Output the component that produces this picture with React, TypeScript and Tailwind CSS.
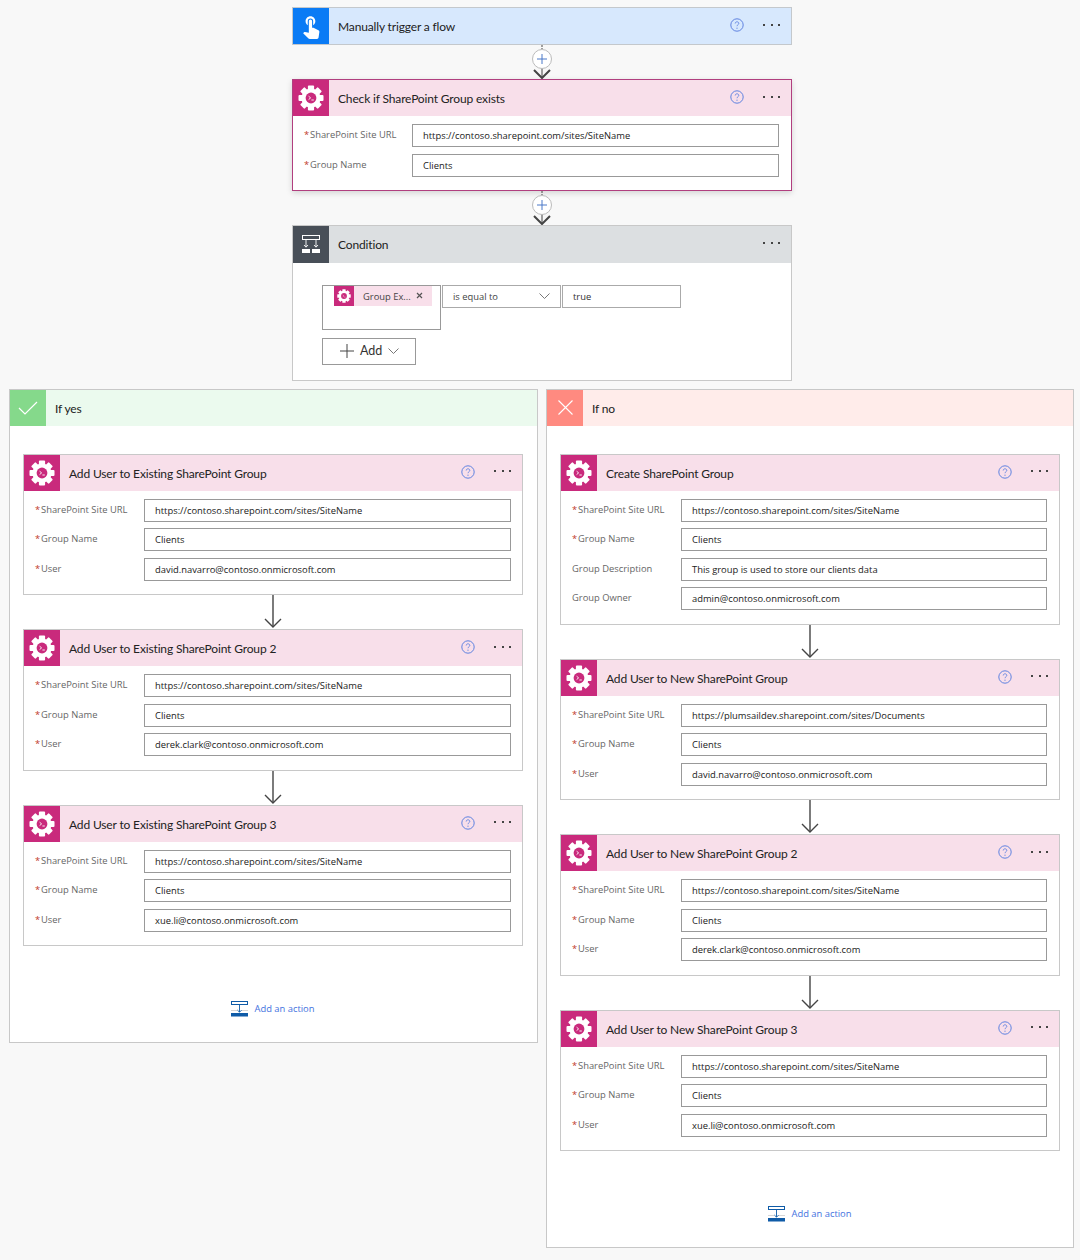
import React from "react";
import { MdTouchApp } from "react-icons/md";

const PINK = "#c92a7c";

function Gear({ size = 26, inner = PINK }: { size?: number; inner?: string }) {
  const teeth = [0, 45, 90, 135, 180, 225, 270, 315];
  return (
    <svg width={size} height={size} viewBox="0 0 26 26">
      {teeth.map((a) => (
        <rect key={a} x="9.9" y="0.5" width="6.2" height="5.5" rx="1" fill="#fff" transform={`rotate(${a} 13 13)`} />
      ))}
      <circle cx="13" cy="13" r="9.6" fill="#fff" />
      <circle cx="13" cy="13" r="5.4" fill={inner} />
      <path d="M10.6 11.2l2 1.7-2 1.7" stroke="#fff" strokeWidth="0.9" fill="none" />
      <path d="M13.4 15h2.4" stroke="#fff" strokeWidth="0.9" />
    </svg>
  );
}

function CondIcon() {
  return (
    <svg width="20" height="20" viewBox="0 0 20 20" fill="none" stroke="#fff">
      <rect x="1.5" y="1.5" width="17" height="4" strokeWidth="1" />
      <path d="M5 6v7M15 6v7M3 11l2 2.2L7 11M13 11l2 2.2 2-2.2" strokeWidth="0.9" />
      <rect x="1" y="15" width="8" height="4" fill="#fff" stroke="none" />
      <rect x="11" y="15" width="8" height="4" fill="#fff" stroke="none" />
    </svg>
  );
}

function HelpIcon() {
  return (
    <svg width="14" height="14" viewBox="0 0 14 14" fill="none">
      <circle cx="7" cy="7" r="6.2" stroke="#5f82e0" strokeWidth="1" />
      <path d="M5.2 5.5c0-1 .8-1.7 1.8-1.7s1.8.7 1.8 1.6c0 1.3-1.8 1.4-1.8 2.8" stroke="#5f82e0" strokeWidth="0.9" />
      <circle cx="7" cy="10.2" r="0.6" fill="#5f82e0" />
    </svg>
  );
}

function Dots() {
  return (
    <div className="flex w-[17px] justify-between">
      <span className="h-[2px] w-[2px] bg-[#444]" />
      <span className="h-[2px] w-[2px] bg-[#444]" />
      <span className="h-[2px] w-[2px] bg-[#444]" />
    </div>
  );
}

type Field = { label: string; value: string; req?: boolean };

function FieldRow({ f, labelW }: { f: Field; labelW: string }) {
  return (
    <div className="flex h-[23px] items-start">
      <div className={`${labelW} flex shrink-0 items-center gap-[3px] pt-[3px] text-[9.4px] leading-[16px] text-[#666]`}>
        {f.req !== false && <span className="w-[3px] text-[#c0392b]">*</span>}
        <span>{f.label}</span>
      </div>
      <div className="flex h-[23px] flex-1 items-center border border-[#999] bg-white pl-[10px] pt-[2px] text-[9.4px] text-[#222]">{f.value}</div>
    </div>
  );
}

function Header({
  title,
  head,
  iconBg,
  icon,
  help = true,
  dots = true,
  height = "h-[36px]",
}: {
  title: string;
  head: string;
  iconBg: string;
  icon: React.ReactNode;
  help?: boolean;
  dots?: boolean;
  height?: string;
}) {
  return (
    <div className={`flex ${height} items-center ${head}`}>
      <div className={`flex ${height} w-[36px] items-center justify-center ${iconBg}`}>{icon}</div>
      <div className="flex-1 pl-[9px] pt-[2px] font-['Lato','Open_Sans',sans-serif] text-[12px] tracking-[-0.15px] text-[#222]">{title}</div>
      {help && (
        <div className="mb-[2px] mr-[19px]">
          <HelpIcon />
        </div>
      )}
      {dots && (
        <div className="mb-[3px] mr-[11px]">
          <Dots />
        </div>
      )}
    </div>
  );
}

function ActionCard({ title, fields, narrow }: { title: string; fields: Field[]; narrow?: boolean }) {
  return (
    <div className="w-[500px] border border-[#c8c8c8] bg-white pb-[13.5px]">
      <Header title={title} head="bg-[#f8dfea]" iconBg="bg-[#c92a7c]" icon={<Gear />} />
      <div className={`flex flex-col gap-[6.5px] pt-[8px] pl-[11px] ${narrow ? "pr-[12px]" : "pr-[11px]"}`}>
        {fields.map((f) => (
          <FieldRow key={f.label} f={f} labelW="w-[109px]" />
        ))}
      </div>
    </div>
  );
}

function Arrow() {
  return (
    <svg width="20" height="34" viewBox="0 0 20 34" fill="none" stroke="#444" className="block">
      <path d="M10 0v32" strokeWidth="1.4" />
      <path d="M2 24l8 8 8-8" strokeWidth="1.4" />
    </svg>
  );
}

function PlusConnector() {
  return (
    <div className="relative flex h-[34px] w-[22px] justify-center">
      <svg width="20" height="34" viewBox="0 0 20 34" fill="none" stroke="#444">
        <path d="M10 0v4" strokeWidth="1" strokeDasharray="2 1" />
        <path d="M10 20v12" strokeWidth="1" />
        <path d="M2 25l8 8 8-8" strokeWidth="2" />
      </svg>
      <div className="absolute left-[1px] top-[4px] flex h-[20px] w-[20px] items-center justify-center rounded-full border border-[#bbb] bg-white">
        <svg width="10" height="10" viewBox="0 0 10 10" stroke="#4a78c8" strokeWidth="1">
          <path d="M5 0v10M0 5h10" />
        </svg>
      </div>
    </div>
  );
}

function AddAction() {
  return (
    <div className="flex items-center justify-center gap-[6px]">
      <svg width="17" height="16" viewBox="0 0 17 16" fill="none">
        <rect x="0.5" y="0.5" width="16" height="3" stroke="#0f5ba7" />
        <path d="M8.5 4v7M6.3 9l2.2 2.2L10.7 9" stroke="#0f5ba7" strokeWidth="0.9" />
        <path d="M0 9.5h6M11 9.5h6" stroke="#bbb" strokeWidth="0.6" />
        <rect x="0" y="12" width="17" height="3.5" fill="#0f5ba7" />
      </svg>
      <span className="text-[9.4px] text-[#4472e0]">Add an action</span>
    </div>
  );
}

function Branch({
  title,
  head,
  iconBg,
  icon,
  width,
  cards,
  inner,
  narrow,
}: {
  title: string;
  head: string;
  iconBg: string;
  icon: React.ReactNode;
  width: string;
  cards: { title: string; fields: Field[] }[];
  inner: string;
  narrow?: boolean;
}) {
  return (
    <div className={`${width} shrink-0 border border-[#c8c8c8] bg-white`}>
      <Header title={title} head={head} iconBg={iconBg} icon={icon} help={false} dots={false} />
      <div className={`flex flex-col items-center pt-[28px] ${inner}`}>
        {cards.map((c, i) => (
          <React.Fragment key={c.title}>
            {i > 0 && <Arrow />}
            <ActionCard title={c.title} fields={c.fields} narrow={narrow} />
          </React.Fragment>
        ))}
        <div className="pb-[25px] pt-[55px]">
          <AddAction />
        </div>
      </div>
    </div>
  );
}

const URL = "https://contoso.sharepoint.com/sites/SiteName";
const site = (v = URL): Field => ({ label: "SharePoint Site URL", value: v });
const group: Field = { label: "Group Name", value: "Clients" };
const user = (v: string): Field => ({ label: "User", value: v });

const yesCards = [
  { title: "Add User to Existing SharePoint Group", fields: [site(), group, user("david.navarro@contoso.onmicrosoft.com")] },
  { title: "Add User to Existing SharePoint Group 2", fields: [site(), group, user("derek.clark@contoso.onmicrosoft.com")] },
  { title: "Add User to Existing SharePoint Group 3", fields: [site(), group, user("xue.li@contoso.onmicrosoft.com")] },
];

const noCards = [
  {
    title: "Create SharePoint Group",
    fields: [
      site(),
      group,
      { label: "Group Description", value: "This group is used to store our clients data", req: false },
      { label: "Group Owner", value: "admin@contoso.onmicrosoft.com", req: false },
    ],
  },
  {
    title: "Add User to New SharePoint Group",
    fields: [site("https://plumsaildev.sharepoint.com/sites/Documents"), group, user("david.navarro@contoso.onmicrosoft.com")],
  },
  { title: "Add User to New SharePoint Group 2", fields: [site(), group, user("derek.clark@contoso.onmicrosoft.com")] },
  { title: "Add User to New SharePoint Group 3", fields: [site(), group, user("xue.li@contoso.onmicrosoft.com")] },
];

export default function App() {
  return (
    <div className="flex h-[1260px] w-[1080px] flex-col bg-[#f8f8f8] pt-[7px] font-['Open_Sans','Liberation_Sans',sans-serif]">
      <div className="flex flex-col items-center pl-[4px]">
        <div className="w-[500px] border border-[#c4c8cc]">
          <Header title="Manually trigger a flow" head="bg-[#d7e8fd]" iconBg="bg-[#0a7bf5]" icon={<MdTouchApp size={26} color="#fff" />} />
        </div>
        <PlusConnector />
        <div className="w-[500px] border border-[#b13f7f] bg-white pb-[13px] shadow-[0_2px_6px_rgba(0,0,0,0.15)]">
          <Header title="Check if SharePoint Group exists" head="bg-[#f8dfea]" iconBg="bg-[#c92a7c]" icon={<Gear />} />
          <div className="flex flex-col gap-[6.5px] pt-[8px] pl-[11px] pr-[12px]">
            <FieldRow f={site()} labelW="w-[108px]" />
            <FieldRow f={group} labelW="w-[108px]" />
          </div>
        </div>
        <PlusConnector />
        <div className="w-[500px] border border-[#c8c8c8] bg-white pb-[15px]">
          <Header title="Condition" head="bg-[#dcdfe1]" iconBg="bg-[#484f58]" icon={<CondIcon />} help={false} height="h-[37px]" />
          <div className="pl-[29px] pt-[22px]">
            <div className="flex items-start gap-px">
              <div className="h-[45px] w-[119px] border border-[#999] bg-white pl-[11px]">
                <div className="flex h-[20px] w-[98px] items-center bg-[#f8dfea]">
                  <div className="flex h-[20px] w-[20px] items-center justify-center bg-[#c92a7c]">
                    <Gear size={14} />
                  </div>
                  <span className="ml-[9px] flex-1 pt-[3px] text-[9.4px] text-[#444]">Group Ex...</span>
                  <svg width="7" height="7" viewBox="0 0 7 7" stroke="#555" strokeWidth="1.2" className="mr-[9px]">
                    <path d="M1 1l5 5M6 1l-5 5" />
                  </svg>
                </div>
              </div>
              <div className="flex h-[23px] w-[119px] items-center justify-between border border-[#aaa] px-[10px] text-[9.4px] text-[#444]">
                <span className="pt-[2px]">is equal to</span>
                <svg width="11" height="6" viewBox="0 0 11 6" fill="none" stroke="#777">
                  <path d="M.5.5l5 5 5-5" />
                </svg>
              </div>
              <div className="flex h-[23px] w-[119px] items-center border border-[#aaa] px-[10px] pt-[2px] text-[9.4px] text-[#333]">true</div>
            </div>
            <div className="mt-[8px] flex h-[27px] w-[94px] items-center border border-[#999] pl-[17px] font-['Lato','Open_Sans',sans-serif] text-[12.5px] text-[#333]">
              <svg width="14" height="14" viewBox="0 0 14 14" stroke="#444">
                <path d="M7 0v14M0 7h14" />
              </svg>
              <span className="ml-[6px]">Add</span>
              <svg width="11" height="6" viewBox="0 0 11 6" fill="none" stroke="#777" className="ml-[6px]">
                <path d="M.5.5l5 5 5-5" />
              </svg>
            </div>
          </div>
        </div>
      </div>
      <div className="mt-[8px] flex items-start gap-[8px] pl-[9px]">
        <Branch
          title="If yes"
          head="bg-[#ebfaee]"
          iconBg="bg-[#85d98b]"
          width="w-[529px]"
          cards={yesCards}
          inner="pr-[1px]"
          icon={
            <svg width="20" height="14" viewBox="0 0 20 14" fill="none" stroke="#fff" strokeWidth="1.2">
              <path d="M1 7l6 6L19 1" />
            </svg>
          }
        />
        <Branch
          title="If no"
          head="bg-[#ffecea]"
          iconBg="bg-[#ff8a80]"
          width="w-[528px]"
          cards={noCards}
          inner=""
          narrow
          icon={
            <svg width="15" height="15" viewBox="0 0 15 15" fill="none" stroke="#fff" strokeWidth="1.1">
              <path d="M.5.5l14 14M14.5.5l-14 14" />
            </svg>
          }
        />
      </div>
    </div>
  );
}
